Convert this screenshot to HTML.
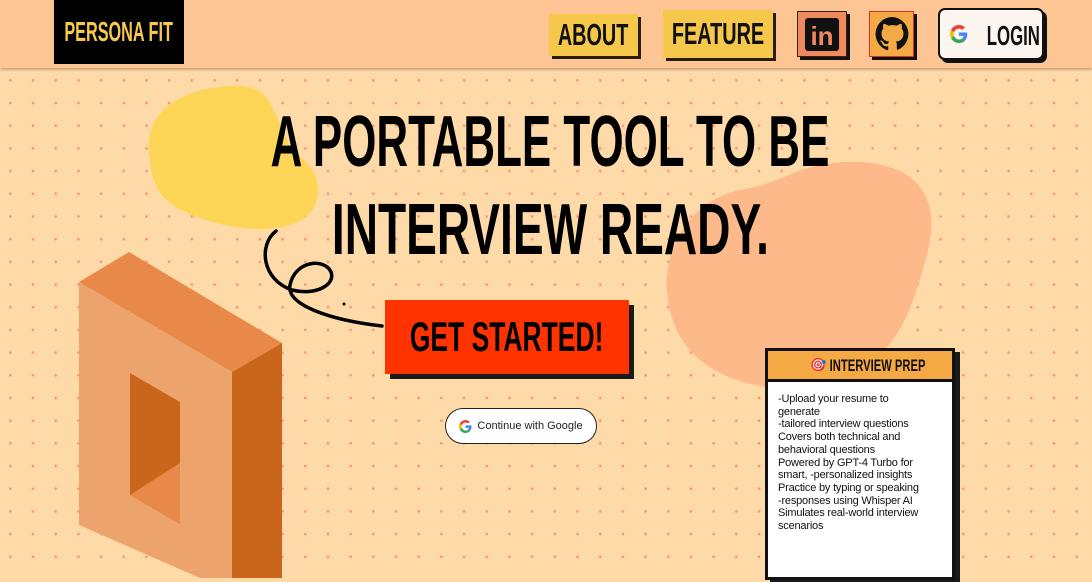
<!DOCTYPE html>
<html><head><meta charset="utf-8"><style>
*{margin:0;padding:0;box-sizing:border-box}
body{width:1092px;height:578px;overflow:hidden;position:relative;background:#fedaa8;font-family:"Liberation Sans",sans-serif}
.dots{position:absolute;left:0;top:68px;width:1092px;height:510px;background-image:radial-gradient(circle,#f79a7e 1.2px,transparent 1.6px);background-size:22.7px 22.7px;background-position:-1px 1px}
header{position:absolute;left:0;top:0;width:1092px;height:68px;background:#fdc593;box-shadow:0 2px 2px rgba(120,80,40,.35);z-index:5}
.cond{font-family:"Liberation Sans Narrow","Liberation Sans",sans-serif;font-weight:bold;white-space:nowrap}
.abs{position:absolute}
.logo{left:54px;top:0;width:130px;height:64px;background:#000;color:#f6c94f;font-size:28px;display:flex;align-items:center;justify-content:center;overflow:hidden}
.nb{background:#f5c84c;box-shadow:3px 3px 0 #2a1d10;color:#111;display:flex;align-items:center;justify-content:center;font-size:31px}
.t{display:inline-block;transform:scaleX(.64);white-space:nowrap}
h1{position:absolute;left:0;width:1100px;text-align:center;font-size:72px;color:#000;line-height:1;white-space:nowrap}
</style></head><body>
<div class="dots"></div>
<svg class="abs" style="left:0;top:0" width="1092" height="578">
<path d="M150 160 C140 110 185 88 230 86 C270 84 268 100 292 150 C330 175 325 215 290 225 C255 235 215 225 185 212 C160 200 152 185 150 160Z" fill="#fed657"/>
<path d="M668 300 C660 250 690 200 740 190 C790 182 800 160 860 162 C920 165 940 200 928 250 C915 300 905 330 880 355 C850 385 800 395 755 385 C710 375 675 350 668 300Z" fill="#fdb98a"/>
<polygon points="79,282 129,252 282,343 232,372" fill="#e8894a"/>
<polygon points="79,282 232,372 232,578 200,578 79,525" fill="#eda46c"/>
<polygon points="232,372 282,343 282,578 232,578" fill="#c9661b"/>
<polygon points="130,373 180,402 180,524 130,495" fill="#c9661b"/>
<polygon points="130,495 180,463 180,524" fill="#e8894a"/>
<path d="M276 231 C258 245 262 280 292 290 C315 296 336 285 331 272 C325 258 295 260 290 285 C286 305 330 320 382 326" fill="none" stroke="#000" stroke-width="3.5" stroke-linecap="round"/>
<circle cx="344" cy="304" r="1.5" fill="#000"/>
</svg>
<header>
<div class="abs logo cond"><span class="t" style="transform:scaleX(.58)">PERSONA FIT</span></div>
<div class="abs nb cond" style="left:549px;top:14px;width:89px;height:42px"><span class="t">ABOUT</span></div>
<div class="abs nb cond" style="left:663px;top:10px;width:110px;height:48px"><span class="t">FEATURE</span></div>
<div class="abs" style="left:797px;top:11px;width:50px;height:46px;background:#ee8a5e;border:1px solid #3a2010;box-shadow:3px 3px 0 #111"><div style="position:absolute;left:7px;top:6px;width:34px;height:33px;background:#111;border-radius:3px;color:#ee8a5e;font:bold 26px 'Liberation Sans',sans-serif;text-align:center;line-height:36px">in</div></div>
<div class="abs" style="left:869px;top:11px;width:45px;height:46px;background:#f5a945;border:1px solid #c33;box-shadow:3px 3px 0 #111"><svg width="43" height="44" viewBox="0 0 24 24" style="position:absolute;left:1px;top:0"><path d="M12 2.5a9.5 9.5 0 0 0-3 18.5c.5.1.6-.2.6-.5v-1.700c-2.6.6-3.2-1.2-3.2-1.2-.4-1.1-1-1.4-1-1.4-.9-.6.1-.6.1-.6.9.1 1.4 1 1.4 1 .8 1.4 2.2 1 2.7.8.1-.6.3-1 .6-1.200-2.1-.2-4.3-1-4.3-4.7 0-1 .4-1.9 1-2.6-.1-.2-.4-1.2.1-2.5 0 0 .8-.3 2.6 1a9 9 0 0 1 4.8 0c1.8-1.3 2.6-1 2.6-1 .5 1.3.2 2.3.1 2.5.6.7 1 1.6 1 2.6 0 3.7-2.2 4.5-4.3 4.7.3.3.6.8.6 1.6v2.4c0 .3.2.6.7.5A9.5 9.5 0 0 0 12 2.5z" fill="#111"/></svg></div>
<div class="abs" style="left:938px;top:8px;width:106px;height:52px;background:#fdf5f0;border:2px solid #111;border-radius:7px;box-shadow:3px 3px 0 #111;overflow:hidden">
<svg width="18" height="18" viewBox="0 0 48 48" style="position:absolute;left:10px;top:15px"><path fill="#EA4335" d="M24 9.5c3.5 0 6.6 1.2 9.1 3.6l6.8-6.8C35.8 2.4 30.3 0 24 0 14.6 0 6.6 5.4 2.7 13.3l7.9 6.2C12.5 13.6 17.8 9.5 24 9.5z"/><path fill="#4285F4" d="M46.1 24.5c0-1.6-.1-3.1-.4-4.5H24v9h12.4c-.5 2.9-2.2 5.4-4.7 7l7.6 5.9c4.4-4.1 6.8-10.1 6.8-17.4z"/><path fill="#FBBC05" d="M10.5 28.6c-.5-1.4-.8-3-.8-4.6s.3-3.2.8-4.6l-7.9-6.2C1 16.5 0 20.1 0 24s1 7.5 2.7 10.8l7.8-6.2z"/><path fill="#34A853" d="M24 48c6.5 0 11.9-2.1 15.9-5.8l-7.6-5.9c-2.1 1.4-4.9 2.3-8.3 2.3-6.2 0-11.5-4.2-13.4-9.9l-7.9 6.2C6.6 42.6 14.6 48 24 48z"/></svg>
<div class="cond" style="position:absolute;left:29px;width:70px;top:10px;text-align:center;font-size:28px;color:#111"><span class="t" style="transform:scaleX(.6)">LOGIN</span></div></div>
</header>
<h1 class="cond" style="top:106px;left:0"><span class="t" style="transform:scaleX(.61)">A PORTABLE TOOL TO BE</span></h1>
<h1 class="cond" style="top:194px;left:0"><span class="t" style="transform:scaleX(.64)">INTERVIEW READY.</span></h1>
<div class="abs" style="left:390px;top:305px;width:244px;height:74px;background:#1a1a1a"></div>
<div class="abs cond" style="left:385px;top:300px;width:244px;height:74px;background:#ff3300;display:flex;align-items:center;justify-content:center;font-size:42px;color:#000"><span class="t" style="transform:scaleX(.63)">GET STARTED!</span></div>
<div class="abs" style="left:445px;top:408px;width:152px;height:36px;background:#fff;border:1.5px solid #222;border-radius:18px;display:flex;align-items:center;justify-content:center;gap:5px;font-size:11px;color:#222;white-space:nowrap">
<svg width="13" height="13" viewBox="0 0 48 48"><path fill="#EA4335" d="M24 9.5c3.5 0 6.6 1.2 9.1 3.6l6.8-6.8C35.8 2.4 30.3 0 24 0 14.6 0 6.6 5.4 2.7 13.3l7.9 6.2C12.5 13.6 17.8 9.5 24 9.5z"/><path fill="#4285F4" d="M46.1 24.5c0-1.6-.1-3.1-.4-4.5H24v9h12.4c-.5 2.9-2.2 5.4-4.7 7l7.6 5.9c4.4-4.1 6.8-10.1 6.8-17.4z"/><path fill="#FBBC05" d="M10.5 28.6c-.5-1.4-.8-3-.8-4.6s.3-3.2.8-4.6l-7.9-6.2C1 16.5 0 20.1 0 24s1 7.5 2.7 10.8l7.8-6.2z"/><path fill="#34A853" d="M24 48c6.5 0 11.9-2.1 15.9-5.8l-7.6-5.9c-2.1 1.4-4.9 2.3-8.3 2.3-6.2 0-11.5-4.2-13.4-9.9l-7.9 6.2C6.6 42.6 14.6 48 24 48z"/></svg>Continue with Google</div>
<div class="abs" style="left:770px;top:352px;width:190px;height:230px;background:#1a1a1a"></div>
<div class="abs" style="left:765px;top:348px;width:190px;height:232px;background:#fff;border:3px solid #111">
<div style="height:31px;background:#f5a945;border-bottom:3px solid #111;position:relative">
<span style="position:absolute;left:42px;top:6px;font-size:13px">🎯</span>
<div class="cond" style="position:absolute;left:20px;width:180px;top:5px;text-align:center;font-size:17px;color:#111"><span class="t" style="transform:scaleX(.66)">INTERVIEW PREP</span></div></div>
<div style="padding:11px 0 0 10px;font-size:11px;line-height:12.7px;color:#111;letter-spacing:-.2px;white-space:nowrap">-Upload your resume to<br>generate<br>-tailored interview questions<br>Covers both technical and<br>behavioral questions<br>Powered by GPT-4 Turbo for<br>smart, -personalized insights<br>Practice by typing or speaking<br>-responses using Whisper AI<br>Simulates real-world interview<br>scenarios</div>
</div>
</body></html>
